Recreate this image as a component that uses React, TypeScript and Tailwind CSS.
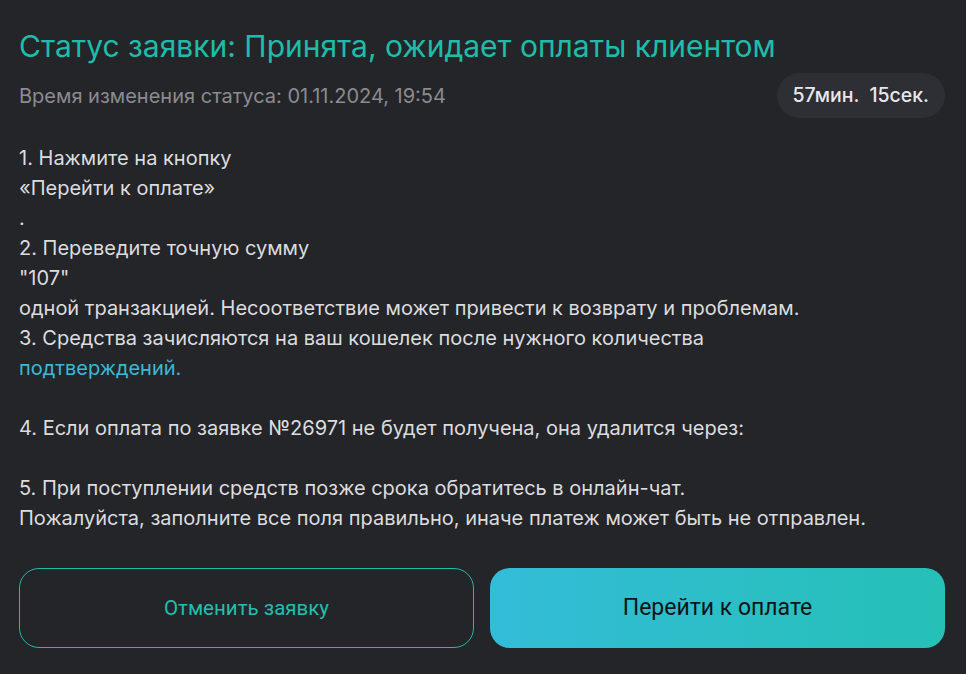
export default function App() {
  const font = { fontFamily: 'Inter, "Noto Sans", sans-serif' };
  return (
    <div className="min-h-screen bg-[#242529] text-[#dcdcdf] pl-[19px] pr-[21px] pt-[27px]" style={font}>
      <h1 className="text-[30px] leading-[38px] text-[#1ebdab] font-normal">
        Статус заявки: Принята, ожидает оплаты клиентом
      </h1>

      <div className="mt-[8px] flex items-center justify-between">
        <p className="text-[20px] text-[#8b8b90]">Время изменения статуса: 01.11.2024, 19:54</p>
        <div className="h-[45px] px-[16px] rounded-full bg-[#2e2f34] flex items-center gap-[10px] text-[19.5px] font-medium text-[#e8e8ec]">
          <span>57мин.</span>
          <span>15сек.</span>
        </div>
      </div>

      <div className="mt-[25px] text-[20px] leading-[30px]">
        <p>1. Нажмите на кнопку</p>
        <p>«Перейти к оплате»</p>
        <p>.</p>
        <p>2. Переведите точную сумму</p>
        <p>"107"</p>
        <p>одной транзакцией. Несоответствие может привести к возврату и проблемам.</p>
        <p>3. Средства зачисляются на ваш кошелек после нужного количества</p>
        <p className="text-[#3ab9d6]">подтверждений.</p>
        <p>&nbsp;</p>
        <p>4. Если оплата по заявке №26971 не будет получена, она удалится через:</p>
        <p>&nbsp;</p>
        <p>5. При поступлении средств позже срока обратитесь в онлайн-чат.</p>
        <p>Пожалуйста, заполните все поля правильно, иначе платеж может быть не отправлен.</p>
      </div>

      <div className="mt-[35px] grid grid-cols-2 gap-4" style={{ fontFamily: 'Roboto, "Liberation Sans", sans-serif' }}>
        <button className="h-[80px] rounded-[20px] border border-[#20bcae] text-[#22bfae] text-[20.5px]">
          Отменить заявку
        </button>
        <button className="h-[80px] rounded-[20px] bg-gradient-to-r from-[#33bcd8] to-[#25c0b6] text-[#101418] text-[23px]">
          Перейти к оплате
        </button>
      </div>
    </div>
  );
}
